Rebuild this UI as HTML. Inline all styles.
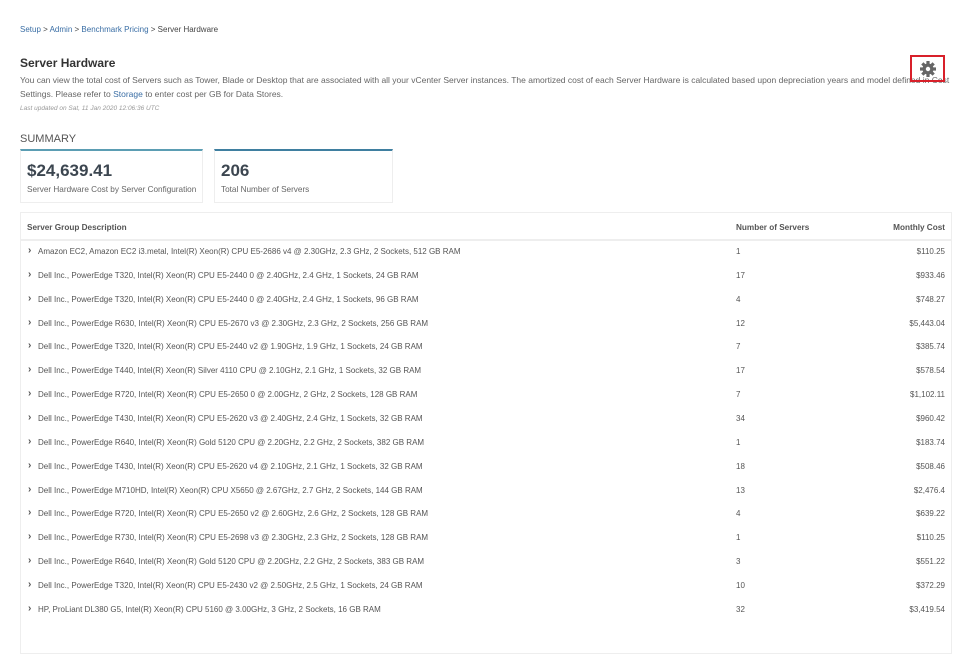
<!DOCTYPE html>
<html><head><meta charset="utf-8"><style>
body{margin:0;background:#fff;font-family:"Liberation Sans",sans-serif;color:#555;width:974px;height:612px;overflow:hidden;position:relative}
.a{color:#3a6ea5}
#bc{position:absolute;left:20px;top:25px;font-size:8px;color:#444}
h1{position:absolute;left:20px;top:56px;margin:0;font-size:12px;font-weight:bold;color:#333}
#desc{position:absolute;left:20px;top:74px;width:935px;font-size:8.5px;line-height:13.5px;color:#666}
#lu{position:absolute;left:20px;top:105px;font-size:6.5px;font-style:italic;color:#999}
#sum{position:absolute;left:20px;top:133px;font-size:11px;color:#555}
.card{position:absolute;top:149px;height:51px;border:1px solid #eee;border-top:2px solid #5b9db3}
.card b{position:absolute;left:6px;top:10px;font-size:17px;color:#3c4650}
.card span{position:absolute;left:6px;top:34px;font-size:8.2px;color:#666}
#gear{position:absolute;left:910px;top:55px;width:35px;height:27px;border:2px solid #d8202a;box-sizing:border-box}
#tbl{position:absolute;left:20px;top:212px;width:930px;height:440px;border:1px solid #eee}
.hd{position:absolute;top:0;height:26px;width:930px;border-bottom:2px solid #eee;font-size:8.2px;font-weight:bold;color:#555}
.r{position:absolute;left:0;width:930px;font-size:8px;color:#555;height:12px}
.c1{position:absolute;left:17px}.c2{position:absolute;left:715px}.c3{position:absolute;right:6px}
.ch{position:absolute;left:7px;font-size:10px;font-weight:bold;top:-2px;color:#555}
</style></head><body>
<div id="bc"><span class="a">Setup</span> &gt; <span class="a">Admin</span> &gt; <span class="a">Benchmark Pricing</span> &gt; Server Hardware</div>
<h1>Server Hardware</h1>
<div id="desc">You can view the total cost of Servers such as Tower, Blade or Desktop that are associated with all your vCenter Server instances. The amortized cost of each Server Hardware is calculated based upon depreciation years and model defined in Cost Settings. Please refer to <span class="a">Storage</span> to enter cost per GB for Data Stores.</div>
<div id="lu">Last updated on Sat, 11 Jan 2020 12:06:36 UTC</div>
<div id="gear"><svg width="31" height="23" viewBox="0 0 31 23"><g transform="translate(16,12)" fill="#666"><circle r="5.5"/><g id="t"><rect x="-1.6" y="-8" width="3.2" height="16"/></g><use href="#t" transform="rotate(45)"/><use href="#t" transform="rotate(90)"/><use href="#t" transform="rotate(135)"/><circle r="2.2" fill="#fff"/></g></svg></div>
<div id="sum">SUMMARY</div>
<div class="card" style="left:20px;width:181px"><b>$24,639.41</b><span>Server Hardware Cost by Server Configuration</span></div>
<div class="card" style="left:214px;width:177px;border-top-color:#3f7fa0"><b>206</b><span>Total Number of Servers</span></div>
<div id="tbl">
<div class="hd"><span style="position:absolute;left:6px;top:10px">Server Group Description</span><span style="position:absolute;left:715px;top:10px">Number of Servers</span><span style="position:absolute;right:6px;top:10px">Monthly Cost</span></div>
<div id="rows"></div>
</div>
<script>
var d=[["Amazon EC2, Amazon EC2 i3.metal, Intel(R) Xeon(R) CPU E5-2686 v4 @ 2.30GHz, 2.3 GHz, 2 Sockets, 512 GB RAM","1","$110.25"],
["Dell Inc., PowerEdge T320, Intel(R) Xeon(R) CPU E5-2440 0 @ 2.40GHz, 2.4 GHz, 1 Sockets, 24 GB RAM","17","$933.46"],
["Dell Inc., PowerEdge T320, Intel(R) Xeon(R) CPU E5-2440 0 @ 2.40GHz, 2.4 GHz, 1 Sockets, 96 GB RAM","4","$748.27"],
["Dell Inc., PowerEdge R630, Intel(R) Xeon(R) CPU E5-2670 v3 @ 2.30GHz, 2.3 GHz, 2 Sockets, 256 GB RAM","12","$5,443.04"],
["Dell Inc., PowerEdge T320, Intel(R) Xeon(R) CPU E5-2440 v2 @ 1.90GHz, 1.9 GHz, 1 Sockets, 24 GB RAM","7","$385.74"],
["Dell Inc., PowerEdge T440, Intel(R) Xeon(R) Silver 4110 CPU @ 2.10GHz, 2.1 GHz, 1 Sockets, 32 GB RAM","17","$578.54"],
["Dell Inc., PowerEdge R720, Intel(R) Xeon(R) CPU E5-2650 0 @ 2.00GHz, 2 GHz, 2 Sockets, 128 GB RAM","7","$1,102.11"],
["Dell Inc., PowerEdge T430, Intel(R) Xeon(R) CPU E5-2620 v3 @ 2.40GHz, 2.4 GHz, 1 Sockets, 32 GB RAM","34","$960.42"],
["Dell Inc., PowerEdge R640, Intel(R) Xeon(R) Gold 5120 CPU @ 2.20GHz, 2.2 GHz, 2 Sockets, 382 GB RAM","1","$183.74"],
["Dell Inc., PowerEdge T430, Intel(R) Xeon(R) CPU E5-2620 v4 @ 2.10GHz, 2.1 GHz, 1 Sockets, 32 GB RAM","18","$508.46"],
["Dell Inc., PowerEdge M710HD, Intel(R) Xeon(R) CPU X5650 @ 2.67GHz, 2.7 GHz, 2 Sockets, 144 GB RAM","13","$2,476.4"],
["Dell Inc., PowerEdge R720, Intel(R) Xeon(R) CPU E5-2650 v2 @ 2.60GHz, 2.6 GHz, 2 Sockets, 128 GB RAM","4","$639.22"],
["Dell Inc., PowerEdge R730, Intel(R) Xeon(R) CPU E5-2698 v3 @ 2.30GHz, 2.3 GHz, 2 Sockets, 128 GB RAM","1","$110.25"],
["Dell Inc., PowerEdge R640, Intel(R) Xeon(R) Gold 5120 CPU @ 2.20GHz, 2.2 GHz, 2 Sockets, 383 GB RAM","3","$551.22"],
["Dell Inc., PowerEdge T320, Intel(R) Xeon(R) CPU E5-2430 v2 @ 2.50GHz, 2.5 GHz, 1 Sockets, 24 GB RAM","10","$372.29"],
["HP, ProLiant DL380 G5, Intel(R) Xeon(R) CPU 5160 @ 3.00GHz, 3 GHz, 2 Sockets, 16 GB RAM","32","$3,419.54"]];
var h="";d.forEach(function(r,i){h+='<div class="r" style="top:'+(34+i*23.85)+'px"><span class="ch">&#8250;</span><span class="c1">'+r[0]+'</span><span class="c2">'+r[1]+'</span><span class="c3">'+r[2]+'</span></div>';});
document.getElementById("rows").innerHTML=h;
</script>
</body></html>
